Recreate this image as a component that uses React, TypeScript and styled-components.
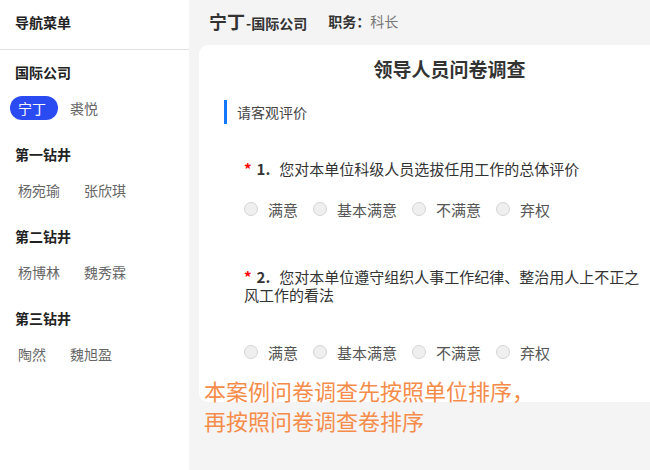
import React from "react";
import styled, { createGlobalStyle } from "styled-components";

const GlobalStyle = createGlobalStyle`
  html, body { margin: 0; padding: 0; }
  body {
    font-family: "Noto Sans CJK SC", "Liberation Sans", sans-serif;
    color: #333;
    background: #f4f4f4;
  }
`;

const Page = styled.div`
  display: flex;
  width: 650px;
  height: 470px;
  overflow: hidden;
  position: relative;
`;

const Sidebar = styled.aside`
  width: 189px;
  flex-shrink: 0;
  background: #fff;
  display: flex;
  flex-direction: column;
`;

const SideHead = styled.div`
  height: 50px;
  box-sizing: border-box;
  padding: 12px 15px 0;
  font-size: 14px;
  font-weight: 700;
  line-height: 20px;
  color: #222;
  border-bottom: 1px solid #e2e2e2;
`;

const Group = styled.div`
  padding-top: 12px;
`;

const GroupTitle = styled.div`
  padding-left: 15px;
  font-size: 14px;
  font-weight: 700;
  line-height: 20px;
  color: #222;
`;

const NameList = styled.div`
  display: flex;
  gap: 4px;
  padding: 14px 0 12px 10px;
`;

const NameItem = styled.div<{ $active?: boolean }>`
  height: 24px;
  line-height: 24px;
  padding: 0 12px 0 8px;
  border-radius: 12px;
  font-size: 14px;
  color: ${(p) => (p.$active ? "#fff" : "#666")};
  background: ${(p) => (p.$active ? "#2b4bf2" : "transparent")};
`;

const Main = styled.main`
  flex: 1;
  min-width: 0;
  display: flex;
  flex-direction: column;
`;

const TopBar = styled.div`
  height: 45px;
  display: flex;
  align-items: center;
  padding: 0 0 3px 20px;
  box-sizing: border-box;
  gap: 21px;
`;

const Who = styled.div`
  display: flex;
  align-items: baseline;
  font-weight: 700;
  color: #333;
`;

const WhoName = styled.span`
  font-size: 18px;
`;

const WhoUnit = styled.span`
  font-size: 14px;
  margin-left: 1px;
`;

const Role = styled.div`
  font-size: 14px;
  color: #777;
  b {
    color: #333;
    font-weight: 700;
  }
`;

const Card = styled.section`
  margin-left: 10px;
  width: 501px;
  flex-shrink: 0;
  background: #fff;
  border-radius: 9px 0 0 9px;
  padding: 12px 0 40px;
  box-sizing: border-box;
`;

const Title = styled.h1`
  margin: 0;
  text-align: center;
  font-size: 19px;
  line-height: 24px;
  font-weight: 700;
  color: #333;
`;

const Intro = styled.div`
  margin: 19px 0 0 25px;
  height: 24px;
  line-height: 24px;
  border-left: 3px solid #1677ff;
  padding-left: 10px;
  font-size: 14px;
  color: #444;
`;

const QuestionBox = styled.div<{ $top: number }>`
  margin-top: ${(p) => p.$top}px;
  padding-left: 45px;
  width: 400px;
`;

const QTitle = styled.div<{ $after: number }>`
  font-size: 15px;
  line-height: 18px;
  color: #333;
  margin-bottom: ${(p) => p.$after}px;
`;

const Star = styled.span`
  color: #f00;
  font-weight: 700;
  margin-right: 5px;
`;

const Num = styled.span`
  font-weight: 700;
  margin-right: 9px;
`;

const Options = styled.div`
  display: flex;
  align-items: center;
  height: 20px;
`;

const Option = styled.label`
  display: flex;
  align-items: center;
  margin-right: 15px;
  font-size: 15px;
  color: #555;
`;

const Radio = styled.span`
  width: 12px;
  height: 12px;
  border-radius: 50%;
  border: 1px solid #d4d4d4;
  background: #efefef;
  margin-right: 10px;
`;

const Note = styled.div`
  position: absolute;
  left: 204px;
  top: 375px;
  font-size: 22px;
  line-height: 30px;
  color: #f58c4a;
`;

const groups = [
  { title: "国际公司", names: ["宁丁", "裘悦"], active: 0 },
  { title: "第一钻井", names: ["杨宛瑜", "张欣琪"] },
  { title: "第二钻井", names: ["杨博林", "魏秀霖"] },
  { title: "第三钻井", names: ["陶然", "魏旭盈"] },
];

const choices = ["满意", "基本满意", "不满意", "弃权"];

const questions = [
  { no: 1, text: "您对本单位科级人员选拔任用工作的总体评价", top: 36, after: 21 },
  { no: 2, text: "您对本单位遵守组织人事工作纪律、整治用人上不正之风工作的看法", top: 49, after: 38 },
];

export default function App() {
  return (
    <Page>
      <GlobalStyle />
      <Sidebar>
        <SideHead>导航菜单</SideHead>
        {groups.map((g) => (
          <Group key={g.title}>
            <GroupTitle>{g.title}</GroupTitle>
            <NameList>
              {g.names.map((n, i) => (
                <NameItem key={n} $active={g.active === i}>
                  {n}
                </NameItem>
              ))}
            </NameList>
          </Group>
        ))}
      </Sidebar>
      <Main>
        <TopBar>
          <Who>
            <WhoName>宁丁</WhoName>
            <WhoUnit>-国际公司</WhoUnit>
          </Who>
          <Role>
            <b>职务：</b>科长
          </Role>
        </TopBar>
        <Card>
          <Title>领导人员问卷调查</Title>
          <Intro>请客观评价</Intro>
          {questions.map((q) => (
            <QuestionBox key={q.no} $top={q.top}>
              <QTitle $after={q.after}>
                <Star>*</Star>
                <Num>{q.no}.</Num>
                {q.text}
              </QTitle>
              <Options>
                {choices.map((c) => (
                  <Option key={c}>
                    <Radio />
                    {c}
                  </Option>
                ))}
              </Options>
            </QuestionBox>
          ))}
        </Card>
      </Main>
      <Note>
        本案例问卷调查先按照单位排序，
        <br />
        再按照问卷调查卷排序
      </Note>
    </Page>
  );
}
